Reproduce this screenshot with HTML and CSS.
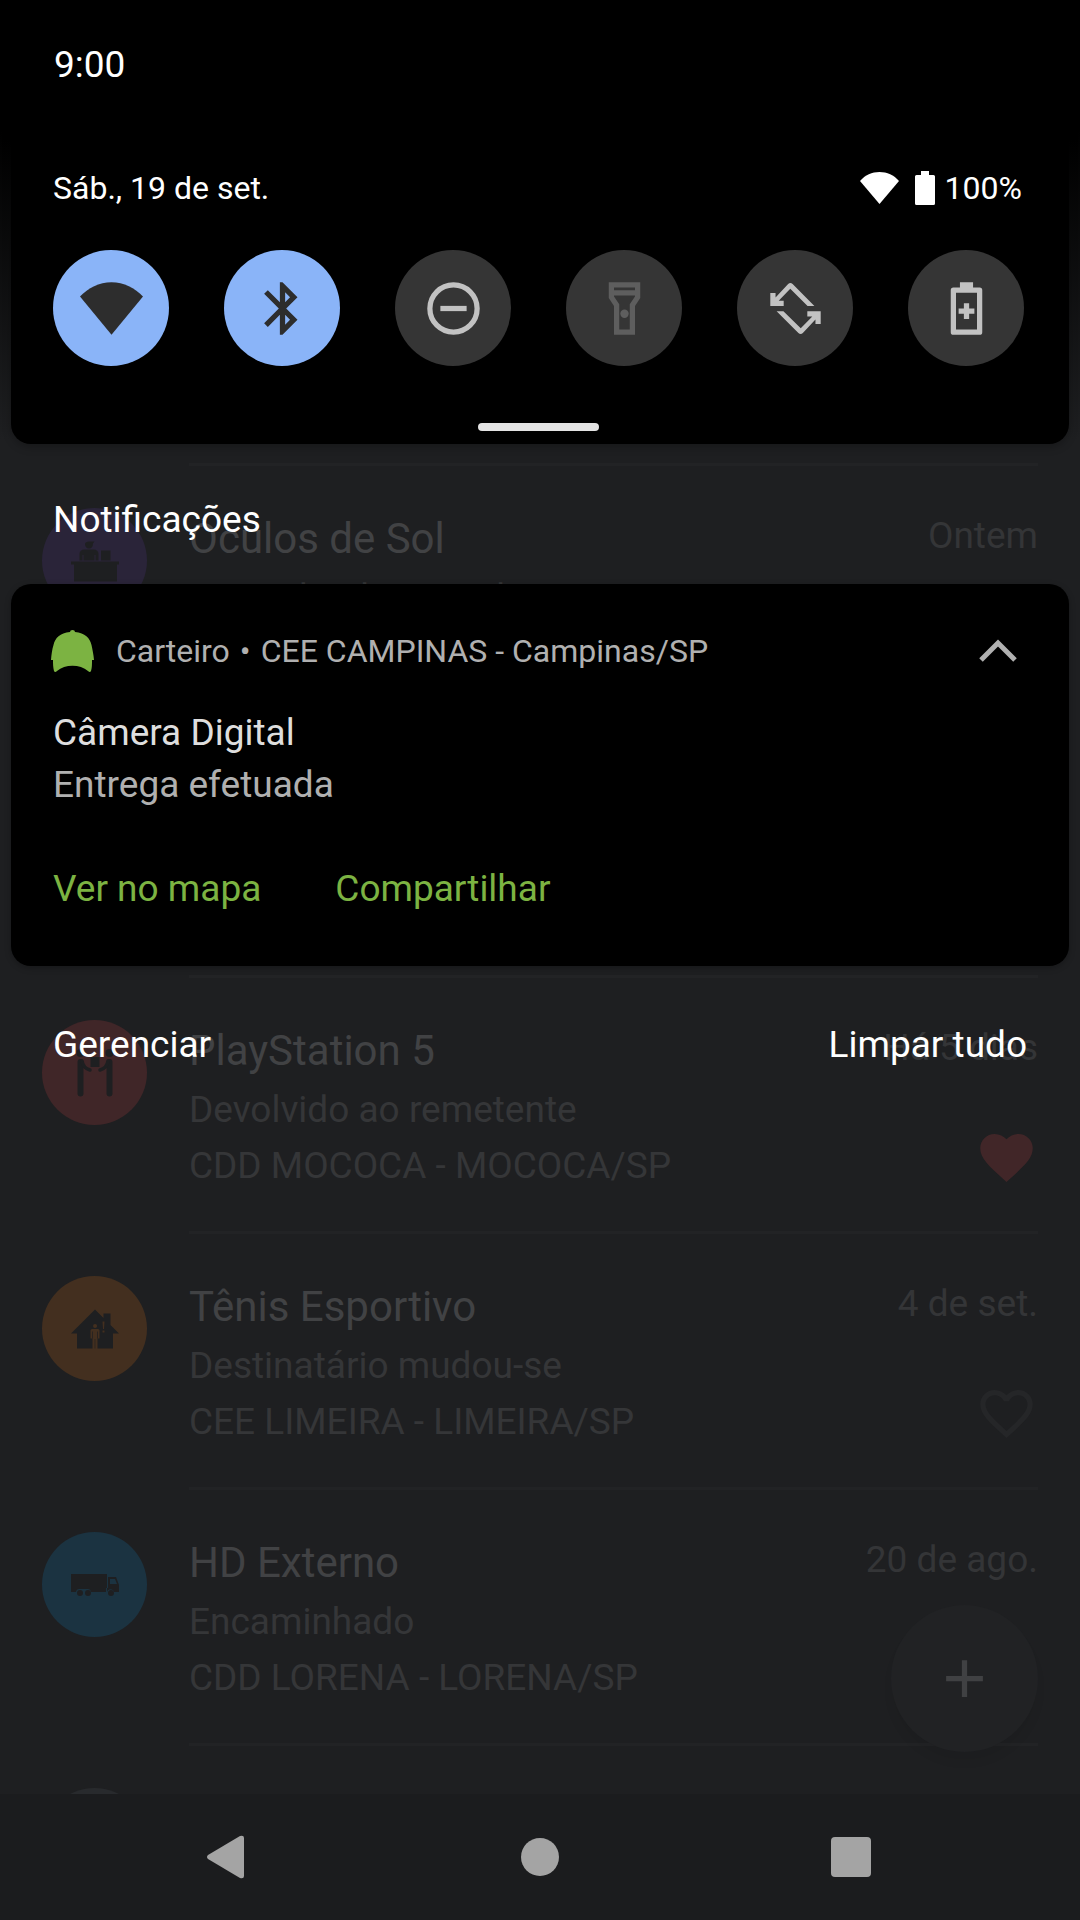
FILE: index.html
```html
<!DOCTYPE html>
<html lang="pt-BR">
<head>
<meta charset="utf-8">
<meta name="viewport" content="width=device-width, initial-scale=1">
<title>Notificações</title>
<link rel="stylesheet" href="styles.css">
</head>
<body>
<div class="screen">
  <div class="stage">
    <main class="app">
      <ul class="parcels">
        <li class="parcel parcel--first">
          <span class="avatar avatar--purple">
            <svg class="avatar-icon" viewBox="0 0 48 48" aria-hidden="true"><path d="M0 24.500h48v3h-2v17H3v-17H0zM8.500 23.500V17c0-3 2-4.500 5-4.500h9c3 0 5 1.500 5 4.500v6.500h-3V18h-1v5.500h-11V18h-1v5.500zM14 7c0-1.500 2-2.500 4-2.500h5.500l-1.500 2c0 3.500-1.500 5-4 5s-4-2-4-4.500zM30 13.500h9.500v10H30z"/></svg>
          </span>
          <div class="parcel-text">
            <h2 class="parcel-title">Óculos de Sol</h2>
            <p class="parcel-line">Aguardando retirada</p>
          </div>
          <div class="parcel-side"><time class="parcel-date">Ontem</time></div>
        </li>
        <li class="parcel"></li>
        <li class="parcel">
          <span class="avatar avatar--red">
            <svg class="avatar-icon" viewBox="0 0 48 48" aria-hidden="true"><g stroke-linecap="round" stroke-linejoin="round" fill="none" stroke="currentColor"><path stroke-width="6" d="M9.500 13v31.500M38.500 13v31.500"/><path stroke-width="3.500" d="M11 12q1 7 8 9M37 12q-1 7-8 9"/></g><path d="M19.500 8h9v10h-9z"/><circle cx="9.500" cy="4" r="4"/><circle cx="38.500" cy="4" r="4"/></svg>
          </span>
          <div class="parcel-text">
            <h2 class="parcel-title">PlayStation 5</h2>
            <p class="parcel-line">Devolvido ao remetente</p>
            <p class="parcel-line">CDD MOCOCA - MOCOCA/SP</p>
          </div>
          <div class="parcel-side">
            <time class="parcel-date">Há 5 dias</time>
            <button class="favorite favorite--on" type="button" aria-label="Remover dos favoritos"><svg class="icon" viewBox="0 0 24 24"><path d="M12 21.35l-1.45-1.32C5.4 15.36 2 12.28 2 8.5 2 5.42 4.42 3 7.5 3c1.74 0 3.41.81 4.5 2.09C13.09 3.81 14.76 3 16.5 3 19.58 3 22 5.42 22 8.5c0 3.78-3.4 6.86-8.55 11.54L12 21.35z"/></svg></button>
          </div>
        </li>
        <li class="parcel">
          <span class="avatar avatar--orange">
            <svg class="avatar-icon" viewBox="0 0 48 48" aria-hidden="true"><path fill-rule="evenodd" d="M24 4.500l8.500 8.500V8.500h7V20l8.500 8.500h-6v15H26.500v-10h2v-8q0-1.500-1.500-1.500h-6q-1.500 0-1.500 1.500v8h2v10H6v-15H0zM24 19a2 2 0 1 0 .1 4a2 2 0 0 0-.1-4zM31.500 16.500l.5 7.500h1l.5-7.500zM31.500 25.500v2h2v-2z"/><path d="M21 26.500h.7v7H21zM26.300 26.500h.7v7h-.7zM23.700 34h.6v9.500h-.6z"/></svg>
          </span>
          <div class="parcel-text">
            <h2 class="parcel-title">Tênis Esportivo</h2>
            <p class="parcel-line">Destinatário mudou-se</p>
            <p class="parcel-line">CEE LIMEIRA - LIMEIRA/SP</p>
          </div>
          <div class="parcel-side">
            <time class="parcel-date">4 de set.</time>
            <button class="favorite" type="button" aria-label="Adicionar aos favoritos"><svg class="icon" viewBox="0 0 24 24"><path d="M16.5 3c-1.74 0-3.41.81-4.5 2.09C10.91 3.81 9.24 3 7.500 3 4.420 3 2 5.420 2 8.500c0 3.780 3.400 6.860 8.550 11.540L12 21.350l1.450-1.320C18.600 15.360 22 12.280 22 8.500 22 5.420 19.580 3 16.500 3zm-4.400 15.550l-.1.100-.1-.1C7.140 14.240 4 11.390 4 8.500 4 6.500 5.500 5 7.500 5c1.540 0 3.040.990 3.570 2.360h1.870C13.460 5.990 14.960 5 16.500 5c2 0 3.500 1.500 3.500 3.500 0 2.890-3.140 5.740-7.900 10.050z"/></svg></button>
          </div>
        </li>
        <li class="parcel">
          <span class="avatar avatar--blue">
            <svg class="avatar-icon" viewBox="0 0 48 48" aria-hidden="true"><path fill-rule="evenodd" d="M0 13h36v18H20a3.600 3.600 0 0 0-4-3h-7a3.600 3.600 0 0 0-4 3H0zM37 16h8l3 8v7h-5a3.600 3.600 0 0 0-7 0h-1v-4h2zM39 18v5h7l-2-5z"/><circle cx="9" cy="32" r="3"/><circle cx="17" cy="32" r="3"/><circle cx="40" cy="32" r="3"/></svg>
          </span>
          <div class="parcel-text">
            <h2 class="parcel-title">HD Externo</h2>
            <p class="parcel-line">Encaminhado</p>
            <p class="parcel-line">CDD LORENA - LORENA/SP</p>
          </div>
          <div class="parcel-side"><time class="parcel-date">20 de ago.</time></div>
        </li>
        <li class="parcel"><span class="avatar avatar--gray"></span></li>
      </ul>
      <button class="fab" type="button" aria-label="Adicionar"><svg class="icon" viewBox="0 0 24 24"><path d="M19 13h-6v6h-2v-6H5v-2h6V5h2v6h6z"/></svg></button>
    </main>

    <div class="shade">
      <header class="status"><time>9:00</time></header>
      <section class="quick">
        <div class="quick-head">
          <span>Sáb., 19 de set.</span>
          <div class="indicators">
            <svg class="wifi-mark" viewBox="0 0 39 32" aria-hidden="true"><path d="M19.500 0C12 0 5 3 0 9l19.500 23L39 9C34 3 27 0 19.500 0z"/></svg>
            <svg class="battery-mark" viewBox="0 0 20 34" aria-hidden="true"><path d="M6 0h8v4h4.500q1.500 0 1.500 1.500v27q0 1.500-1.500 1.500h-17Q0 34 0 32.500v-27Q0 4 1.500 4H6z"/></svg>
            <span>100%</span>
          </div>
        </div>
        <div class="tiles">
          <button class="tile tile--on" type="button" aria-label="Wi-Fi"><svg class="icon" viewBox="0 0 24 24"><path d="M12 2C7.300 2 3.100 4.200 0 7.400L12 22 24 7.400C20.900 4.200 16.700 2 12 2z"/></svg></button>
          <button class="tile tile--on" type="button" aria-label="Bluetooth"><svg class="icon" viewBox="0 0 24 24"><path d="M17.710 7.710L12 2h-1v7.590L6.410 5 5 6.410 10.590 12 5 17.590 6.410 19 11 14.410V22h1l5.710-5.710-4.300-4.290 4.300-4.290zM13 5.830l1.880 1.880L13 9.590V5.830zm1.880 10.460L13 18.170v-3.760l1.880 1.880z"/></svg></button>
          <button class="tile" type="button" aria-label="Não perturbe"><svg class="icon" viewBox="0 0 24 24"><circle cx="12" cy="12" r="9" fill="none" stroke="currentColor" stroke-width="2"/><path d="M7 11h10v2H7z"/></svg></button>
          <button class="tile tile--off" type="button" aria-label="Lanterna"><svg class="icon" viewBox="0 0 24 24"><path fill-rule="evenodd" d="M6 2h12v6l-2 3v11H8V11L6 8zM8 4v1h8V4zM8 7v.4l2 3V20h4v-9.600l2-3V7z"/><circle cx="12" cy="14" r="1.600"/></svg></button>
          <button class="tile" type="button" aria-label="Girar automaticamente"><svg class="icon" viewBox="0 0 24 24"><path d="M19.200 11h-2.600L10 4.500 5.600 9h1.900v2H2.400V6.100h2v1.700l4.800-5.100q.85-.8 1.700 0z"/><path transform="rotate(180 12 12)" d="M19.200 11h-2.600L10 4.500 5.600 9h1.900v2H2.400V6.100h2v1.700l4.800-5.100q.85-.8 1.700 0z"/></svg></button>
          <button class="tile" type="button" aria-label="Economia de bateria"><svg class="icon" viewBox="0 0 24 24"><path fill-rule="evenodd" d="M9.500 2h5v2H17q1 0 1 1v16q0 1-1 1H7q-1 0-1-1V5q0-1 1-1h2.500zM8 6v14h8V6z"/><path d="M11 10h2v2h2v2h-2v2h-2v-2H9v-2h2z"/></svg></button>
        </div>
        <span class="handle"></span>
      </section>

      <h1 class="shade-title">Notificações</h1>

      <article class="card">
        <header class="card-head">
          <svg class="cap" viewBox="0 0 43 42" aria-hidden="true"><path d="M19 2q0-2 2.500-2T24 2c10 1 15 6 16.500 13 1 5 2 9 2.500 15h-2c0 4 0 8-1 11q-1 2-3 0c-8-7-23-7-31 0q-2 2-3 0c-1-4-1-7-1-11H0c.5-6 1-10 2.500-15C4 8 9 3 19 2z"/></svg>
          <div class="card-source">
            <span>Carteiro</span>
            <span>•</span>
            <span>CEE CAMPINAS - Campinas/SP</span>
          </div>
          <button class="collapse" type="button" aria-label="Recolher"><svg class="chevron" viewBox="0 0 38 22"><path d="M2 20L19 3l17 17" fill="none" stroke="currentColor" stroke-width="5"/></svg></button>
        </header>
        <h2 class="card-title">Câmera Digital</h2>
        <p class="card-body">Entrega efetuada</p>
        <div class="card-actions">
          <button class="action" type="button">Ver no mapa</button>
          <button class="action" type="button">Compartilhar</button>
        </div>
      </article>

      <footer class="shade-foot">
        <button class="foot-button" type="button">Gerenciar</button>
        <button class="foot-button" type="button">Limpar tudo</button>
      </footer>
    </div>
  </div>

  <nav class="navbar">
    <button class="nav-button" type="button" aria-label="Voltar"><svg class="nav-icon" viewBox="0 0 44 44"><path d="M1 20L33 1q4-1 4 2v38q0 3-4 2L1 24q-2-2 0-4z"/></svg></button>
    <button class="nav-button" type="button" aria-label="Início"><svg class="nav-icon" viewBox="0 0 44 44"><circle cx="22" cy="22" r="19"/></svg></button>
    <button class="nav-button" type="button" aria-label="Recentes"><svg class="nav-icon" viewBox="0 0 44 44"><rect x="2" y="2" width="40" height="40" rx="4"/></svg></button>
  </nav>
</div>
</body>
</html>
```
FILE: styles.css
```css
* {
  box-sizing: border-box;
}

body,
h1,
h2,
p,
ul {
  margin: 0;
  padding: 0;
}

body {
  background: #1e1f21;
  color: #fff;
  font-family: Roboto, "Noto Sans", sans-serif;
  font-size: 37px;
  line-height: 56px;
}

h1,
h2 {
  font-size: inherit;
  font-weight: 400;
}

button {
  padding: 0;
  border: 0;
  background: none;
  color: inherit;
  font: inherit;
}

svg {
  display: block;
  overflow: visible;
  fill: currentColor;
}

.icon {
  width: 63px;
  height: 63px;
}

.screen {
  display: flex;
  flex-direction: column;
  height: 100vh;
}

/* The list and the shade share one grid cell, the shade on top. */
.stage {
  flex: 1;
  display: grid;
  grid-template: minmax(0, 1fr) / minmax(0, 1fr);
  min-height: 0;
  overflow: hidden;
  background: linear-gradient(#000 130px, #1e1f21 440px);
}

.app,
.shade {
  grid-area: 1 / 1;
  min-height: 0;
}

/* Parcel list */
.app {
  position: relative;
  overflow: hidden;
  padding-top: 463px;
}

.parcels {
  list-style: none;
}

.parcel {
  position: relative;
  display: flex;
  gap: 42px;
  height: 256px;
  padding: 42px 42px 0;
}

.parcel::after {
  content: "";
  position: absolute;
  right: 42px;
  bottom: 0;
  left: 189px;
  height: 3px;
  background: #222325;
}

.parcel--first {
  height: 259px;
  padding-top: 45px;
}

.parcel--first::before {
  content: "";
  position: absolute;
  top: 0;
  right: 42px;
  left: 189px;
  height: 3px;
  background: #222325;
}

.avatar {
  display: grid;
  place-items: center;
  flex: none;
  width: 105px;
  height: 105px;
  border-radius: 50%;
  color: #1e1f21;
}

.avatar-icon {
  width: 48px;
  height: 48px;
}

.avatar--purple { background: #2a2439; }
.avatar--red { background: #402628; }
.avatar--orange { background: #432f1f; }
.avatar--blue { background: #1b3341; }
.avatar--gray { background: #282a2d; }

.parcel-text {
  flex: 1;
  padding-top: 3px;
}

.parcel-title {
  margin-bottom: 3px;
  color: #414244;
  font-size: 42px;
}

.parcel-line {
  color: #353638;
}

.parcel-side {
  display: flex;
  flex-direction: column;
  align-items: flex-end;
  gap: 50px;
}

.parcel-date {
  color: #343537;
}

.favorite {
  color: #252628;
}

.favorite--on {
  color: #412628;
}

.fab {
  position: absolute;
  right: 42px;
  bottom: 42px;
  display: grid;
  place-items: center;
  width: 147px;
  height: 147px;
  border-radius: 50%;
  background: #212224;
  box-shadow: 0 10px 10px rgba(0, 0, 0, 0.05);
  color: #404143;
}

/* Notification shade */
.shade {
  position: relative;
  padding: 0 11px;
}

.status {
  padding: 37px 43px 35px;
}

.quick {
  padding: 32px 45px 13px 42px;
  border-radius: 0 0 20px 20px;
  background: #000;
  box-shadow: 0 3px 8px rgba(0, 0, 0, 0.25);
}

.quick-head {
  display: flex;
  align-items: center;
  justify-content: space-between;
  font-size: 32px;
}

.indicators {
  display: flex;
  align-items: center;
  padding-right: 2px;
}

.wifi-mark {
  width: 39px;
  height: 32px;
  margin-right: 16px;
}

.battery-mark {
  width: 20px;
  height: 34px;
  margin-right: 10px;
}

.tiles {
  display: flex;
  justify-content: space-between;
  padding: 34px 0 57px;
}

.tile {
  display: grid;
  place-items: center;
  width: 116px;
  height: 116px;
  border-radius: 50%;
  background: #353535;
  color: #c2c2c2;
}

.tile--on {
  background: #8ab4f8;
  color: #2d2d2d;
}

.tile--off {
  color: #5e5e5e;
}

.handle {
  display: block;
  width: 121px;
  height: 8px;
  margin: 0 auto;
  border-radius: 4px;
  background: #e4e4e4;
}

.shade-title {
  padding: 48px 42px 36px;
}

.card {
  padding: 39px 42px 49px;
  border-radius: 20px;
  background: #000;
  box-shadow: 0 2px 6px rgba(0, 0, 0, 0.25);
}

.card-head {
  display: flex;
  align-items: center;
  margin-bottom: 28px;
  color: #b0b0b0;
  font-size: 32px;
}

.cap {
  width: 43px;
  height: 42px;
  margin: 0 22px 0 -2px;
  color: #7cb342;
}

.card-source {
  flex: 1;
  display: flex;
  gap: 10px;
}

.collapse {
  margin-right: 10px;
}

.chevron {
  width: 38px;
  height: 22px;
}

.card-title {
  color: #dedede;
  line-height: 52px;
}

.card-body {
  color: #b0b0b0;
  line-height: 52px;
}

.card-actions {
  display: flex;
  gap: 74px;
  padding-top: 50px;
  color: #7cb342;
}

.shade-foot {
  display: flex;
  justify-content: space-between;
  padding: 51px 42px;
}

/* System navigation */
.navbar {
  display: grid;
  grid-template-columns: repeat(3, 1fr);
  height: 126px;
  padding: 0 73px;
  background: #1b1c1e;
  color: #a4a4a4;
}

.nav-button {
  display: grid;
  place-items: center;
}

.nav-icon {
  width: 44px;
  height: 44px;
}
```
